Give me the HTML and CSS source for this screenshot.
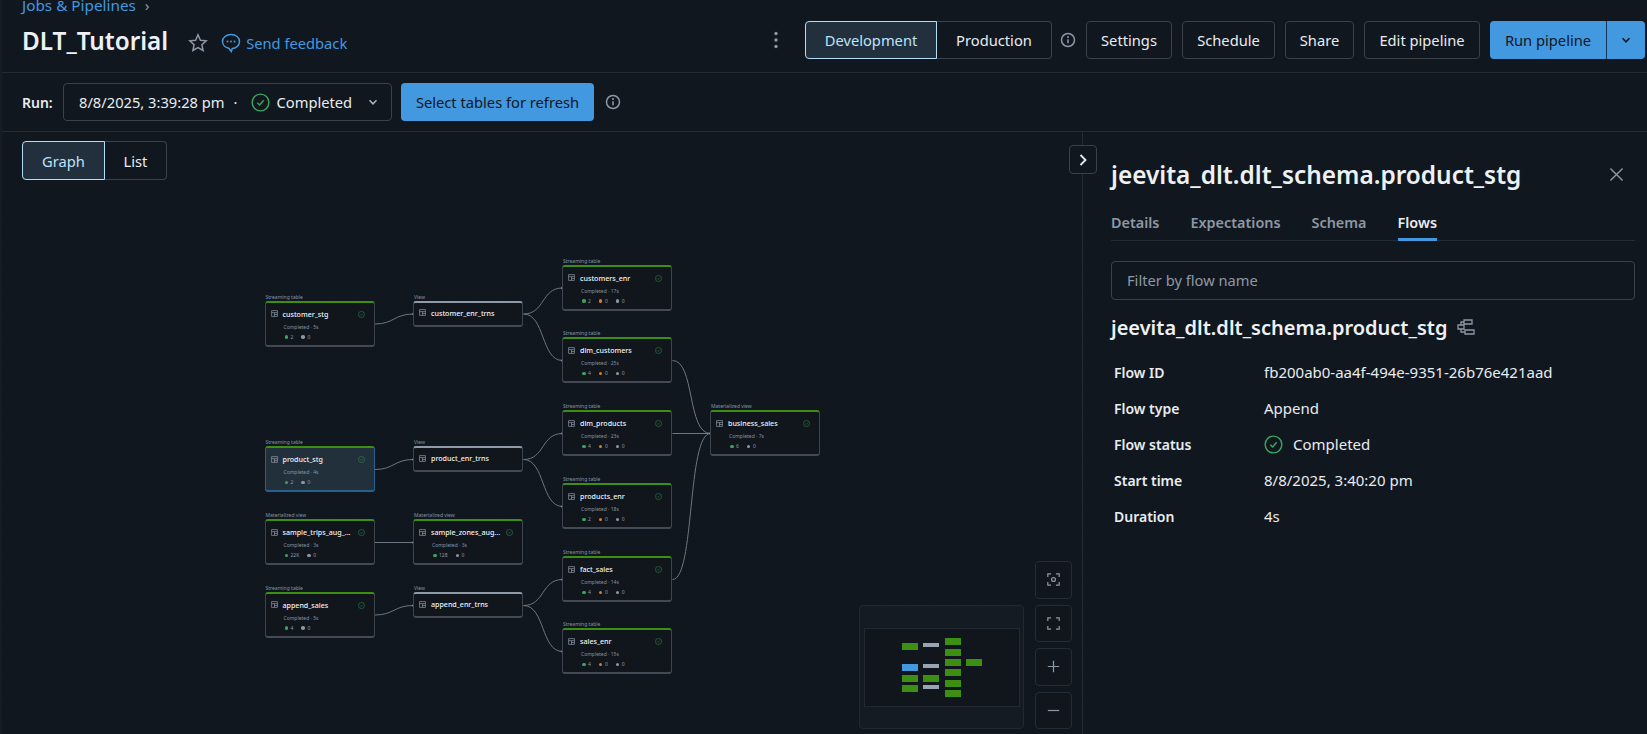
FILE: index.html
```html
<!DOCTYPE html>
<html lang="en">

<head>
    <meta charset="UTF-8">
    <title>DLT_Tutorial</title>
    <link rel="stylesheet" href="styles.css">
</head>

<body>
    <svg class="sprite" xmlns="http://www.w3.org/2000/svg">
        <symbol id="i-check" viewBox="0 0 20 20">
            <circle cx="10" cy="10" r="8.8" fill="none" stroke="currentColor" stroke-width="1.5" />
            <path d="M6.6 10.3l2.4 2.4 4.4-5" fill="none" stroke="currentColor" stroke-width="1.5" />
        </symbol>
        <symbol id="i-info" viewBox="0 0 16 16">
            <circle cx="8" cy="8" r="6.5" fill="none" stroke="currentColor" stroke-width="1.5" />
            <path d="M8 7.2v4" fill="none" stroke="currentColor" stroke-width="1.6" />
            <circle cx="8" cy="5" r="1" fill="currentColor" />
        </symbol>
        <symbol id="i-down" viewBox="0 0 12 12">
            <path d="M2.5 4.2L6 7.8l3.5-3.6" fill="none" stroke="currentColor" stroke-width="1.5" />
        </symbol>
        <symbol id="i-table" viewBox="0 0 12 12">
            <path d="M1 1h10v10H1zM1 4.5h10M6 4.5V11M6 7.7h5" fill="none" stroke="currentColor" stroke-width="1.2" />
        </symbol>
    </svg>

    <header class="page-header">
        <div class="header-left">
            <div class="breadcrumb">
                <a class="crumb-link">Jobs &amp; Pipelines</a>
                <span class="crumb-sep">›</span>
            </div>
            <div class="title-row">
                <h1 class="page-title">DLT_Tutorial</h1>
                <svg class="star-icon" viewBox="0 0 20 20">
                    <path d="M10 1.8l2.4 5.4 5.8.6-4.3 3.9 1.2 5.8L10 14.6l-5.100 2.900 1.200-5.800-4.300-3.900 5.800-.6z" fill="none" stroke="currentColor" stroke-width="1.5" />
                </svg>
                <a class="feedback-link">
                    <svg class="feedback-icon" viewBox="0 0 20 20">
                        <path d="M10 1.500c4.800 0 8.500 3 8.500 7s-3.700 7-7.200 7l-1 3-2.500-3.300c-3.300-.6-6.300-3.200-6.300-6.700 0-4 3.700-7 8.500-7z" fill="none" stroke="currentColor" stroke-width="1.500" />
                        <circle cx="6.500" cy="8.500" r="1" fill="currentColor" />
                        <circle cx="10" cy="8.500" r="1" fill="currentColor" />
                        <circle cx="13.500" cy="8.500" r="1" fill="currentColor" />
                    </svg>
                    Send feedback
                </a>
            </div>
        </div>

        <div class="header-actions">
            <svg class="kebab-icon" viewBox="0 0 4 18">
                <circle cx="2" cy="2.500" r="1.700" />
                <circle cx="2" cy="9" r="1.700" />
                <circle cx="2" cy="15.500" r="1.700" />
            </svg>
            <div class="segmented mode-switch">
                <button class="seg-button active">Development</button>
                <button class="seg-button">Production</button>
            </div>
            <svg class="info-icon"><use href="#i-info" /></svg>
            <button class="button settings-button">Settings</button>
            <button class="button schedule-button">Schedule</button>
            <button class="button share-button">Share</button>
            <button class="button edit-button">Edit pipeline</button>
            <div class="run-split">
                <button class="run-main">Run pipeline</button>
                <button class="run-caret"><svg class="caret-icon"><use href="#i-down" /></svg></button>
            </div>
        </div>
    </header>

    <section class="run-bar">
        <span class="run-label">Run:</span>
        <div class="run-select">
            <span class="run-date">8/8/2025, 3:39:28 pm</span>
            <span class="run-dot">·</span>
            <svg class="run-check"><use href="#i-check" /></svg>
            <span class="run-status">Completed</span>
            <svg class="caret-icon select-caret"><use href="#i-down" /></svg>
        </div>
        <button class="primary-button">Select tables for refresh</button>
        <svg class="info-icon"><use href="#i-info" /></svg>
    </section>

    <main class="workspace">
        <div class="canvas">
            <div class="canvas-dots"></div>

            <div class="segmented view-switch">
                <button class="seg-button active">Graph</button>
                <button class="seg-button">List</button>
            </div>

            <div class="graph">
                <svg class="edges" width="560" height="400" viewBox="0 0 560 400">
                    <path d="M110 23C129 23 129 13 148.500 13" />
                    <path d="M258.500 13C280 13 276 -13 297.500 -13" />
                    <path d="M258.500 13C280 13 276 59.500 297.500 59.500" />
                    <path d="M110 168.500C129 168.500 129 158.500 148.500 158.500" />
                    <path d="M258.500 158.500C280 158.500 276 132.500 297.500 132.500" />
                    <path d="M258.500 158.500C280 158.500 276 205.500 297.500 205.500" />
                    <path d="M110 241.500H148.500" />
                    <path d="M110 314C129 314 129 304.500 148.500 304.500" />
                    <path d="M258.500 304.500C280 304.500 276 278.500 297.500 278.500" />
                    <path d="M258.500 304.500C280 304.500 276 350.500 297.500 350.500" />
                    <path d="M407.500 59.500C430 59.500 422 132.500 445.500 132.500" />
                    <path d="M407.500 132.500H445.500" />
                    <path d="M407.500 278.500C430 278.500 422 132.500 445.500 132.500" />
                    <g class="handles">
                        <circle cx="148.500" cy="13" r="1.300" />
                        <circle cx="148.500" cy="158.500" r="1.300" />
                        <circle cx="148.500" cy="241.500" r="1.300" />
                        <circle cx="148.500" cy="304.500" r="1.300" />
                        <circle cx="297.500" cy="-13" r="1.300" />
                        <circle cx="297.500" cy="59.500" r="1.300" />
                        <circle cx="297.500" cy="132.500" r="1.300" />
                        <circle cx="297.500" cy="205.500" r="1.300" />
                        <circle cx="297.500" cy="278.500" r="1.300" />
                        <circle cx="297.500" cy="350.500" r="1.300" />
                        <circle cx="445.500" cy="132.500" r="1.300" />
                    </g>
                </svg>

                <div class="node n-customer-stg">
                    <span class="node-type">Streaming table</span>
                    <div class="node-head">
                        <svg class="node-icon"><use href="#i-table" /></svg>
                        <span class="node-name">customer_stg</span>
                        <svg class="node-check"><use href="#i-check" /></svg>
                    </div>
                    <div class="node-sub">Completed · 5s</div>
                    <div class="node-counts"><span class="count ok">2</span><span class="count idle">0</span></div>
                </div>

                <div class="node view n-customer-enr">
                    <span class="node-type">View</span>
                    <div class="node-head">
                        <svg class="node-icon"><use href="#i-table" /></svg>
                        <span class="node-name">customer_enr_trns</span>
                    </div>
                </div>

                <div class="node n-customers-enr">
                    <span class="node-type">Streaming table</span>
                    <div class="node-head">
                        <svg class="node-icon"><use href="#i-table" /></svg>
                        <span class="node-name">customers_enr</span>
                        <svg class="node-check"><use href="#i-check" /></svg>
                    </div>
                    <div class="node-sub">Completed · 17s</div>
                    <div class="node-counts"><span class="count ok">2</span><span class="count warn">0</span><span class="count idle">0</span></div>
                </div>

                <div class="node n-dim-customers">
                    <span class="node-type">Streaming table</span>
                    <div class="node-head">
                        <svg class="node-icon"><use href="#i-table" /></svg>
                        <span class="node-name">dim_customers</span>
                        <svg class="node-check"><use href="#i-check" /></svg>
                    </div>
                    <div class="node-sub">Completed · 25s</div>
                    <div class="node-counts"><span class="count ok">4</span><span class="count warn">0</span><span class="count idle">0</span></div>
                </div>

                <div class="node n-dim-products">
                    <span class="node-type">Streaming table</span>
                    <div class="node-head">
                        <svg class="node-icon"><use href="#i-table" /></svg>
                        <span class="node-name">dim_products</span>
                        <svg class="node-check"><use href="#i-check" /></svg>
                    </div>
                    <div class="node-sub">Completed · 23s</div>
                    <div class="node-counts"><span class="count ok">4</span><span class="count warn">0</span><span class="count idle">0</span></div>
                </div>

                <div class="node n-products-enr">
                    <span class="node-type">Streaming table</span>
                    <div class="node-head">
                        <svg class="node-icon"><use href="#i-table" /></svg>
                        <span class="node-name">products_enr</span>
                        <svg class="node-check"><use href="#i-check" /></svg>
                    </div>
                    <div class="node-sub">Completed · 18s</div>
                    <div class="node-counts"><span class="count ok">2</span><span class="count warn">0</span><span class="count idle">0</span></div>
                </div>

                <div class="node n-fact-sales">
                    <span class="node-type">Streaming table</span>
                    <div class="node-head">
                        <svg class="node-icon"><use href="#i-table" /></svg>
                        <span class="node-name">fact_sales</span>
                        <svg class="node-check"><use href="#i-check" /></svg>
                    </div>
                    <div class="node-sub">Completed · 14s</div>
                    <div class="node-counts"><span class="count ok">4</span><span class="count warn">0</span><span class="count idle">0</span></div>
                </div>

                <div class="node n-sales-enr">
                    <span class="node-type">Streaming table</span>
                    <div class="node-head">
                        <svg class="node-icon"><use href="#i-table" /></svg>
                        <span class="node-name">sales_enr</span>
                        <svg class="node-check"><use href="#i-check" /></svg>
                    </div>
                    <div class="node-sub">Completed · 15s</div>
                    <div class="node-counts"><span class="count ok">4</span><span class="count warn">0</span><span class="count idle">0</span></div>
                </div>

                <div class="node n-business-sales">
                    <span class="node-type">Materialized view</span>
                    <div class="node-head">
                        <svg class="node-icon"><use href="#i-table" /></svg>
                        <span class="node-name">business_sales</span>
                        <svg class="node-check"><use href="#i-check" /></svg>
                    </div>
                    <div class="node-sub">Completed · 7s</div>
                    <div class="node-counts"><span class="count ok">6</span><span class="count idle">0</span></div>
                </div>

                <div class="node selected n-product-stg">
                    <span class="node-type">Streaming table</span>
                    <div class="node-head">
                        <svg class="node-icon"><use href="#i-table" /></svg>
                        <span class="node-name">product_stg</span>
                        <svg class="node-check"><use href="#i-check" /></svg>
                    </div>
                    <div class="node-sub">Completed · 4s</div>
                    <div class="node-counts"><span class="count ok">2</span><span class="count idle">0</span></div>
                </div>

                <div class="node view n-product-enr">
                    <span class="node-type">View</span>
                    <div class="node-head">
                        <svg class="node-icon"><use href="#i-table" /></svg>
                        <span class="node-name">product_enr_trns</span>
                    </div>
                </div>

                <div class="node n-sample-trips">
                    <span class="node-type">Materialized view</span>
                    <div class="node-head">
                        <svg class="node-icon"><use href="#i-table" /></svg>
                        <span class="node-name">sample_trips_aug_...</span>
                        <svg class="node-check"><use href="#i-check" /></svg>
                    </div>
                    <div class="node-sub">Completed · 3s</div>
                    <div class="node-counts"><span class="count ok">22K</span><span class="count idle">0</span></div>
                </div>

                <div class="node n-sample-zones">
                    <span class="node-type">Materialized view</span>
                    <div class="node-head">
                        <svg class="node-icon"><use href="#i-table" /></svg>
                        <span class="node-name">sample_zones_aug...</span>
                        <svg class="node-check"><use href="#i-check" /></svg>
                    </div>
                    <div class="node-sub">Completed · 3s</div>
                    <div class="node-counts"><span class="count ok">128</span><span class="count idle">0</span></div>
                </div>

                <div class="node n-append-sales">
                    <span class="node-type">Streaming table</span>
                    <div class="node-head">
                        <svg class="node-icon"><use href="#i-table" /></svg>
                        <span class="node-name">append_sales</span>
                        <svg class="node-check"><use href="#i-check" /></svg>
                    </div>
                    <div class="node-sub">Completed · 5s</div>
                    <div class="node-counts"><span class="count ok">4</span><span class="count idle">0</span></div>
                </div>

                <div class="node view n-append-enr">
                    <span class="node-type">View</span>
                    <div class="node-head">
                        <svg class="node-icon"><use href="#i-table" /></svg>
                        <span class="node-name">append_enr_trns</span>
                    </div>
                </div>
            </div>

            <div class="minimap">
                <svg class="minimap-view" viewBox="0 0 154 77">
                    <g class="mini-green">
                        <rect x="37" y="14" width="16" height="7" />
                        <rect x="37" y="46" width="16" height="7" />
                        <rect x="37" y="56" width="16" height="7" />
                        <rect x="58" y="46" width="16" height="7" />
                        <rect x="80" y="9" width="16" height="7" />
                        <rect x="80" y="20" width="16" height="7" />
                        <rect x="80" y="30" width="16" height="7" />
                        <rect x="80" y="40" width="16" height="7" />
                        <rect x="80" y="51" width="16" height="7" />
                        <rect x="80" y="61" width="16" height="7" />
                        <rect x="101" y="30" width="16" height="7" />
                    </g>
                    <g class="mini-grey">
                        <rect x="58" y="14" width="16" height="4" />
                        <rect x="58" y="35" width="16" height="4" />
                        <rect x="58" y="56" width="16" height="4" />
                    </g>
                    <rect class="mini-blue" x="37" y="35" width="16" height="7" />
                </svg>
            </div>

            <div class="zoom-controls">
                <button class="zoom-button">
                    <svg class="zoom-icon" viewBox="0 0 16 16">
                        <path d="M1 5V1h4M11 1h4v4M15 11v4h-4M5 15H1v-4" />
                        <circle cx="8" cy="8" r="2.400" />
                    </svg>
                </button>
                <button class="zoom-button">
                    <svg class="zoom-icon" viewBox="0 0 16 16">
                        <path d="M1 5V1h4M11 1h4v4M15 11v4h-4M5 15H1v-4" />
                    </svg>
                </button>
                <button class="zoom-button">
                    <svg class="zoom-icon" viewBox="0 0 16 16"><path d="M8 1v14M1 8h14" /></svg>
                </button>
                <button class="zoom-button">
                    <svg class="zoom-icon" viewBox="0 0 16 16"><path d="M1 8h14" /></svg>
                </button>
            </div>
        </div>

        <aside class="details-panel">
            <button class="collapse-button">
                <svg class="collapse-icon" viewBox="0 0 10 14"><path d="M2.500 2l5 5-5 5" /></svg>
            </button>

            <div class="panel-title-row">
                <h2 class="panel-title">jeevita_dlt.dlt_schema.product_stg</h2>
                <svg class="close-icon" viewBox="0 0 16 16"><path d="M1.500 1.500l13 13M14.500 1.500l-13 13" /></svg>
            </div>

            <nav class="tabs">
                <a class="tab">Details</a>
                <a class="tab">Expectations</a>
                <a class="tab">Schema</a>
                <a class="tab active">Flows</a>
            </nav>

            <input class="filter-input" type="text" placeholder="Filter by flow name">

            <div class="flow-heading">
                <h3 class="flow-name">jeevita_dlt.dlt_schema.product_stg</h3>
                <svg class="flow-icon" viewBox="0 0 18 16">
                    <path d="M7 1h8v4H7zM1 6h6v4H1zM8 11h9v4H8zM4 6V3h3M4 10v3h4" fill="none" stroke="currentColor" stroke-width="1.300" />
                </svg>
            </div>

            <dl class="flow-info">
                <dt>Flow ID</dt>
                <dd>fb200ab0-aa4f-494e-9351-26b76e421aad</dd>
                <dt>Flow type</dt>
                <dd>Append</dd>
                <dt>Flow status</dt>
                <dd class="status-cell"><svg class="status-check"><use href="#i-check" /></svg>Completed</dd>
                <dt>Start time</dt>
                <dd>8/8/2025, 3:40:20 pm</dd>
                <dt>Duration</dt>
                <dd>4s</dd>
            </dl>
        </aside>
    </main>
</body>

</html>
```

FILE: styles.css
```css
* {
    box-sizing: border-box;
}

html,
body {
    height: 100%;
}

body {
    margin: 0;
    height: 734px;
    overflow: hidden;
    display: flex;
    flex-direction: column;
    border-left: 2px solid #171c23;
    background-color: #11171f;
    color: #e8ecf0;
    font-family: "Noto Sans", "Open Sans", Arial, sans-serif;
    font-size: 14.700px;
}

.sprite {
    display: none;
}

button {
    font-family: inherit;
    font-size: 14.700px;
    cursor: pointer;
}

/* header */
.page-header {
    height: 73px;
    flex: none;
    display: flex;
    justify-content: space-between;
    padding: 21px 2px 0 20px;
    border-bottom: 1px solid #262c35;
}

.header-left {
    margin-top: -25px;
}

.breadcrumb {
    height: 18px;
    line-height: 18px;
    display: flex;
    gap: 9px;
    font-size: 15.300px;
}

.crumb-link,
.feedback-link {
    color: #4299e0;
}

.crumb-sep {
    color: #8d98a5;
}

.title-row {
    height: 56px;
    display: flex;
    align-items: center;
}

.page-title {
    margin: 0 20px 3px 0;
    font-size: 24.300px;
    font-weight: 600;
    color: #eef1f4;
}

.star-icon {
    width: 20px;
    height: 20px;
    margin-right: 13px;
    margin-top: 2px;
    color: #8d98a5;
}

.feedback-link {
    display: flex;
    align-items: center;
    gap: 5px;
    margin-top: 2px;
}

.feedback-icon {
    width: 20px;
    height: 20px;
}

.header-actions {
    display: flex;
    align-items: flex-start;
    gap: 10px;
}

.kebab-icon {
    width: 4px;
    height: 18px;
    margin: 10px 17px 0 0;
    fill: #8d98a5;
}

.segmented {
    display: flex;
    height: 38px;
}

.seg-button {
    border: 1px solid #3a414b;
    background: transparent;
    color: #e8ecf0;
    padding: 0;
}

.seg-button:first-child {
    border-radius: 4px 0 0 4px;
}

.seg-button:last-child {
    border-left: 0;
    border-radius: 0 4px 4px 0;
}

.seg-button.active {
    background-color: #22303e;
    border-color: #b5dcf7;
    color: #bfe2f9;
}

.mode-switch .seg-button:first-child {
    width: 132px;
}

.mode-switch .seg-button:last-child {
    width: 115px;
}

.info-icon {
    width: 16px;
    height: 16px;
    color: #8d98a5;
    flex: none;
}

.header-actions .info-icon {
    margin: 11px 0 0 -2px;
}

.button {
    height: 38px;
    border: 1px solid #3a414b;
    border-radius: 4px;
    background: transparent;
    color: #e8ecf0;
    padding: 0;
}

.settings-button {
    width: 86px;
}

.schedule-button {
    width: 93px;
}

.share-button {
    width: 69px;
}

.edit-button {
    width: 116px;
}

.run-split {
    display: flex;
    height: 38px;
}

.run-main,
.run-caret {
    border: 0;
    background-color: #4299e0;
    color: #11171f;
}

.run-main {
    width: 116px;
    padding: 0;
    border-radius: 4px 0 0 4px;
}

.run-caret {
    width: 39px;
    padding: 0;
    border-left: 1px solid #14365a;
    border-radius: 0 4px 4px 0;
    display: flex;
    align-items: center;
    justify-content: center;
}

.caret-icon {
    width: 12px;
    height: 12px;
}

/* run row */
.run-bar {
    height: 59px;
    flex: none;
    display: flex;
    align-items: center;
    padding-left: 20px;
    border-bottom: 1px solid #262c35;
}

.run-label {
    width: 41px;
    font-size: 14px;
    font-weight: 600;
}

.run-select {
    width: 329px;
    height: 38px;
    display: flex;
    align-items: center;
    padding: 0 15px;
    border: 1px solid #3a414b;
    border-radius: 4px;
}

.run-dot {
    margin: 0 13px 0 9px;
}

.run-check {
    width: 19px;
    height: 19px;
    margin-right: 7px;
    color: #3ba55d;
}

.select-caret {
    margin-left: auto;
    margin-right: -3px;
    color: #aab4bf;
}

.primary-button {
    width: 193px;
    height: 38px;
    margin-left: 9px;
    margin-right: 11px;
    padding: 0;
    border: 0;
    border-radius: 4px;
    background-color: #4299e0;
    color: #11171f;
}

/* main area */
.workspace {
    flex: 1;
    display: flex;
    min-height: 0;
}

.canvas {
    position: relative;
    width: 1080px;
    flex: none;
    overflow: hidden;
    padding: 9px 0 0 20px;
}

.canvas-dots {
    position: absolute;
    left: 0;
    right: 0;
    top: 58px;
    bottom: 0;
    background-image: radial-gradient(#0f141a 0.7px, transparent 0.8px);
    background-size: 3px 3px;
}

.view-switch {
    position: relative;
    height: 39px;
}

.view-switch .seg-button:first-child {
    width: 83px;
}

.view-switch .seg-button:last-child {
    width: 62px;
}

/* graph, coordinates relative to first node */
.graph {
    position: absolute;
    left: 262.500px;
    top: 168.500px;
}

.edges {
    position: absolute;
    left: 0;
    top: 0;
    overflow: visible;
    fill: none;
    stroke: #6d7681;
    stroke-width: 1;
}

.handles circle {
    fill: #8d98a5;
    stroke: none;
}

.node {
    position: absolute;
    width: 110px;
    height: 46px;
    background-color: #11161d;
    border: 1px solid #3d444e;
    border-top: 2px solid #3c8f12;
    border-bottom: 2px solid #434a55;
    border-radius: 3px;
    padding: 0 5px;
}

.node.view {
    height: 26px;
    border-top-color: #8f9aa8;
}

.node.selected {
    background-color: #22303c;
    border-color: #28608f;
    border-top-color: #3c8f12;
}

.node-type {
    position: absolute;
    left: 0;
    bottom: 100%;
    font-size: 5px;
    line-height: 7px;
    margin-bottom: 2px;
    color: #8394a6;
    white-space: nowrap;
}

.node-head {
    display: flex;
    align-items: center;
    height: 12px;
    margin-top: 5px;
}

.node.view .node-head {
    margin-top: 4px;
}

.node-icon {
    width: 7px;
    height: 7px;
    margin-right: 5px;
    color: #8d98a5;
    flex: none;
}

.node-name {
    font-size: 7.100px;
    font-weight: 500;
    color: #f2f4f6;
    white-space: nowrap;
}

.node-check {
    position: absolute;
    left: 92px;
    top: 8px;
    width: 7px;
    height: 7px;
    color: #2f8f4e;
}

.node-sub {
    margin: 4px 0 0 13px;
    font-size: 5px;
    line-height: 7px;
    color: #8394a6;
}

.node-counts {
    display: flex;
    gap: 8px;
    margin: 3px 0 0 14px;
}

.count {
    display: flex;
    align-items: center;
    gap: 2.500px;
    font-size: 5px;
    line-height: 7px;
    color: #8d98a5;
}

.count::before {
    content: "";
    width: 3.500px;
    height: 3.500px;
    border-radius: 50%;
    background-color: #8d98a5;
}

.count.ok::before {
    background-color: #3ba55d;
}

.count.warn::before {
    background-color: #de7c25;
}

.n-customer-stg {
    left: 0;
    top: 0;
}

.n-customer-enr {
    left: 148.500px;
    top: 0;
}

.n-customers-enr {
    left: 297.500px;
    top: -36px;
}

.n-dim-customers {
    left: 297.500px;
    top: 36.500px;
}

.n-dim-products {
    left: 297.500px;
    top: 109.500px;
}

.n-products-enr {
    left: 297.500px;
    top: 182.500px;
}

.n-fact-sales {
    left: 297.500px;
    top: 255.500px;
}

.n-sales-enr {
    left: 297.500px;
    top: 327.500px;
}

.n-business-sales {
    left: 445.500px;
    top: 109.500px;
}

.n-product-stg {
    left: 0;
    top: 145.500px;
}

.n-product-enr {
    left: 148.500px;
    top: 145.500px;
}

.n-sample-trips {
    left: 0;
    top: 218.500px;
}

.n-sample-zones {
    left: 148.500px;
    top: 218.500px;
}

.n-append-sales {
    left: 0;
    top: 291px;
}

.n-append-enr {
    left: 148.500px;
    top: 291.500px;
}

/* minimap + zoom */
.minimap {
    position: absolute;
    left: 857px;
    bottom: 5px;
    width: 165px;
    height: 124px;
    padding: 23px 5px 0 5px;
    background-color: #151b23;
    border: 1px solid #232932;
    border-radius: 4px;
}

.minimap-view {
    display: block;
    width: 154px;
    height: 77px;
    background-color: #11161d;
    outline: 1px solid #232932;
}

.mini-green {
    fill: #3c8f12;
}

.mini-grey {
    fill: #98a4b2;
}

.mini-blue {
    fill: #4299e0;
}

.zoom-controls {
    position: absolute;
    left: 1033px;
    bottom: 5px;
    display: flex;
    flex-direction: column;
    gap: 6px;
}

.zoom-button {
    width: 37px;
    height: 37.500px;
    padding: 0;
    display: flex;
    align-items: center;
    justify-content: center;
    background-color: #11161d;
    border: 1px solid #262c35;
    border-radius: 4px;
}

.zoom-icon {
    width: 13px;
    height: 13px;
    fill: none;
    stroke: #8d98a5;
    stroke-width: 1.500;
}

/* right panel */
.details-panel {
    position: relative;
    flex: 1;
    padding: 27px 12px 0 28px;
    border-left: 1px solid #262c35;
}

.collapse-button {
    position: absolute;
    left: -14px;
    top: 13px;
    width: 28px;
    height: 29px;
    padding: 0;
    display: flex;
    align-items: center;
    justify-content: center;
    background-color: #11171f;
    border: 1px solid #3a414b;
    border-radius: 4px;
}

.collapse-icon {
    width: 10px;
    height: 14px;
    fill: none;
    stroke: #e8ecf0;
    stroke-width: 1.800;
}

.panel-title-row {
    display: flex;
    align-items: center;
    justify-content: space-between;
    height: 30px;
}

.panel-title {
    margin: 0;
    font-size: 24.400px;
    font-weight: 600;
    color: #eef1f4;
}

.close-icon {
    width: 15px;
    height: 15px;
    margin-right: 11px;
    fill: none;
    stroke: #8d98a5;
    stroke-width: 1.500;
}

.tabs {
    display: flex;
    gap: 31px;
    height: 34px;
    margin-top: 18px;
    border-bottom: 1px solid #262c35;
    font-size: 14.400px;
}

.tab {
    height: 34px;
    line-height: 32px;
    font-weight: 600;
    color: #8d98a5;
}

.tab.active {
    color: #e8ecf0;
    border-bottom: 3px solid #4299e0;
}

.filter-input {
    display: block;
    width: 100%;
    height: 39px;
    margin-top: 20px;
    padding: 0 15px 2px;
    background: transparent;
    border: 1px solid #3a414b;
    border-radius: 4px;
    color: #e8ecf0;
    font-family: inherit;
    font-size: 14.700px;
}

.filter-input::placeholder {
    color: #8d98a5;
}

.flow-heading {
    display: flex;
    align-items: center;
    gap: 10px;
    height: 26px;
    margin-top: 14px;
}

.flow-name {
    margin: 0;
    font-size: 20px;
    font-weight: 600;
    color: #eef1f4;
}

.flow-icon {
    width: 18px;
    height: 16px;
    color: #8d98a5;
}

.flow-info {
    display: grid;
    grid-template-columns: 150px 1fr;
    grid-auto-rows: 36px;
    align-items: center;
    margin: 14px 0 0;
    padding-left: 3px;
}

.flow-info dt {
    font-size: 14px;
    font-weight: 600;
}

.flow-info dd {
    margin: 0;
    font-size: 15px;
}

.status-cell {
    display: flex;
    align-items: center;
    gap: 10px;
}

.status-check {
    width: 19px;
    height: 19px;
    color: #3ba55d;
}
```
